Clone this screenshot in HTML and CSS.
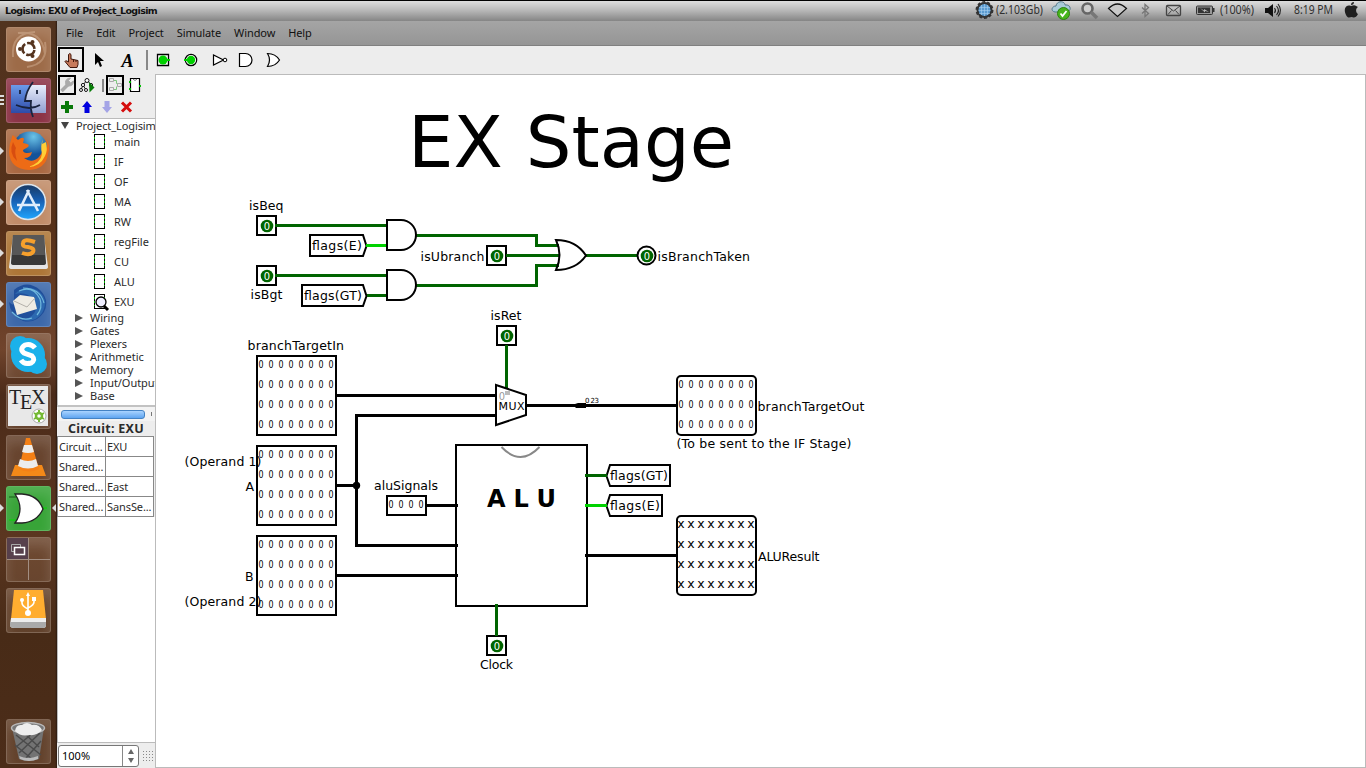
FILE: index.html
```
<!DOCTYPE html>
<html lang="en">
<head>
<meta charset="utf-8">
<title>Logisim: EXU of Project_Logisim</title>
<link rel="stylesheet" href="styles.css">
</head>
<body>
<header class="topbar">
  <span class="title">Logisim: EXU of Project_Logisim</span>
  <svg class="tray" width="400" height="21" viewBox="966 0 400 21">
    <circle cx="984.500" cy="10" r="7" fill="#5b9bd0" stroke="#333" stroke-width="2"/><circle cx="984.500" cy="10" r="8.200" fill="none" stroke="#333" stroke-width="1.500" stroke-dasharray="3 2.150"/>
    <path d="M979 7.500h11M978.500 10.500h12M979 13.500h11M981.500 5v10M984.500 4v12M987.500 5v10" stroke="#a9d0ee" stroke-width=".6"/>
    <text x="996" y="14" textLength="47" lengthAdjust="spacingAndGlyphs">(2.103Gb)</text>
    <path d="M1055 12c-5-1-3-6 1-6 1-6 9-5 9-1 6-1 7 6 2 7z" fill="#a9cbd9" stroke="#55798c"/>
    <circle cx="1063.500" cy="13.500" r="6" fill="#48b51c" stroke="#2d8410"/><path d="M1060.500 13.500l2 2.500 4-5" stroke="#fff" stroke-width="1.800" fill="none"/>
    <circle cx="1087.500" cy="8.500" r="5" fill="#ccc" stroke="#666" stroke-width="2.600"/><path d="M1091 12l6 6" stroke="#777" stroke-width="3.500"/>
    <path d="M1108.500 8.500Q1117.500-.5 1126.500 8.500L1117.500 16.500z" fill="#c9c9c9" stroke="#111" stroke-width="1.200"/>
    <path d="M1142 7.500l6.500 6-3.500 3v-12l3.500 3-6.500 6" fill="none" stroke="#777" stroke-width="1.300"/>
    <rect x="1166.500" y="5.500" width="14" height="10" rx="1" fill="none" stroke="#444" stroke-width="1.300"/><path d="M1167 6l6.500 5 6.500-5M1168 14.500l3.500-4M1179 14.500l-3.500-4" fill="none" stroke="#444"/>
    <rect x="1196.500" y="6" width="16" height="8.500" rx="1" fill="#999" stroke="#333"/><path d="M1198 7.500h12v5.500h-12z" fill="#333"/><path d="M1213 8h1.500v4h-1.500z" fill="#333"/><path d="M1200 8l4 2.500v-1.500l5 3-4-1v1.500z" fill="#bbb"/>
    <text x="1220" y="14" textLength="34" lengthAdjust="spacingAndGlyphs">(100%)</text>
    <path d="M1265 8h3l5-4v13l-5-4h-3z" fill="#111"/><path d="M1274.500 8q2 2.500 0 5M1276.500 6q4 4.500 0 9M1278 4q5 6.500 0 12.500" fill="none" stroke="#222" stroke-width="1.100"/>
    <text x="1294" y="14" textLength="39" lengthAdjust="spacingAndGlyphs">8:19 PM</text>
    <path d="M1351 6c4-2 5 0 7 1-3 2-2 6 0 7-2 4-4 4-6 3-2 0-4 2-6-2-3-6 0-11 5-9zM1351 5c0-2 1-3 3-3 0 2-1 3-3 3z" fill="#202020"/>
  </svg>
</header>
<div class="desktop">
  <nav class="launcher">
    <div class="tile ubuntu"><svg viewBox="0 0 45 45"><path d="M7 30Q5 6 29 5M39 15q4 22-18 25M12 6q24-3 27 21" fill="none" stroke="#e0c0a6" stroke-opacity=".4" stroke-width="2"/><circle cx="22.500" cy="22" r="12.500" fill="#fff"/><circle cx="22.500" cy="22" r="6" fill="none" stroke="#55341f" stroke-width="2.600" stroke-dasharray="10.500 2.060" stroke-dashoffset="-1"/><circle cx="14" cy="22" r="2" fill="#55341f"/><circle cx="26.500" cy="15" r="2" fill="#55341f"/><circle cx="26.500" cy="29" r="2" fill="#55341f"/></svg></div>
    <div class="tile finder"><svg viewBox="0 0 45 45"><defs><linearGradient id="fa" x2="0" y2="1"><stop stop-color="#6c9bea"/><stop offset="1" stop-color="#2e4ba8"/></linearGradient><linearGradient id="fb" x2="0" y2="1"><stop stop-color="#e8edfb"/><stop offset="1" stop-color="#909ed0"/></linearGradient></defs><path d="M5 7h35v28H5z" fill="url(#fb)"/><path d="M5 7h19q-4 7-5 16h6v12H5z" fill="url(#fa)"/><path d="M27 4Q20 13 19 23h6q-1 8 2 16M10 27q14 6 24 0M14 12v4M31 12v4" fill="none" stroke="#19233d" stroke-width="1.800"/></svg></div>
    <div class="tile firefox"><svg viewBox="0 0 45 45"><defs><radialGradient id="gl" cx=".6" cy=".15"><stop stop-color="#6bc4e9"/><stop offset="1" stop-color="#14539a"/></radialGradient></defs><circle cx="24" cy="20" r="17.500" fill="url(#gl)"/><path d="M6 8q0-3 2-1l4 4q5-4 6-1l-1 4q8 1 5 4l-5 3q0 3 4 3 3 0 5-1-1 6-8 6 8 6 15-1 5-6 4-14l4 5q1-4-1-9 5 6 2 15-2 15-19 16Q4 40 3 23 3 15 6 8z" fill="#ed6b16"/><path d="M37 10l-1 5 4-2q2 8-1 14-5 11-17 11 13-4 14-13-2-8 1-15z" fill="#ffce36"/><path d="M7 13q-5 11 4 19-3-10-1-13z" fill="#d84d10"/></svg></div>
    <div class="tile store"><svg viewBox="0 0 45 45"><defs><linearGradient id="ap" x2="0" y2="1"><stop stop-color="#183962"/><stop offset=".45" stop-color="#175fb2"/><stop offset="1" stop-color="#20a6ff"/></linearGradient></defs><circle cx="22" cy="22" r="17.500" fill="url(#ap)" stroke="#dce6ee" stroke-width="1.500"/><path d="M23 10L13 31M21 10l11 21M11 25h23" stroke="#dfecfb" stroke-width="2.600" fill="none"/></svg></div>
    <div class="tile sublime"><svg viewBox="0 0 45 45"><path d="M7 5h31l4 31q0 2-3 2H6q-3 0-3-2z" fill="#e4e4e4"/><path d="M7 4h31l2 28q0 2-3 2H8q-3 0-3-2z" fill="#383838"/><path d="M7 4h31l1 20H6z" fill="#575757"/><path d="M29 11q-11-4-12 1-1 4 5 4 7 1 5 5-3 4-11 1" stroke="#f6a02c" stroke-width="4" fill="none"/></svg></div>
    <div class="tile thunderbird"><svg viewBox="0 0 45 45"><path d="M8 8q13-11 26 0 10 10 4 22-8 12-21 9Q4 33 3 20q4 4 5 2z" fill="#204f9b"/><path d="M9 12Q18 2 31 8q13 9 5 23-7 10-19 7 11-3 13-11 1-8-8-14-6-3-13-1z" fill="#2c69b0"/><path d="M7 19l7-6 14 2 3 12-20 6z" fill="#efece3"/><path d="M8 19l13 6 8-9" fill="none" stroke="#b4b1aa"/><path d="M13 9q14-6 21 8 3 9-3 16M17 6q17 0 21 15M6 30q9 10 20 6" fill="none" stroke="#70b8dd" stroke-width="1.200"/></svg></div>
    <div class="tile plain"><svg viewBox="0 0 45 45"><circle cx="22" cy="22" r="17" fill="#1bb1ea"/><circle cx="14" cy="13" r="10" fill="#1bb1ea"/><circle cx="31" cy="31" r="10" fill="#1bb1ea"/><path d="M29 15q-4-5-10-3-6 4-1 8l8 3q4 4-1 7-7 2-10-3" stroke="#fff" stroke-width="5" fill="none"/></svg></div>
    <div class="tile plain"><svg viewBox="0 0 45 45"><path d="M2 2h40v40H2z" fill="#e8e8e8"/><g class="tex"><text x="3" y="20">T</text><text x="14" y="25">E</text><text x="25" y="20">X</text></g><circle cx="33" cy="32" r="7" fill="#fff" stroke="#aaa"/><circle cx="33" cy="32" r="3" fill="none" stroke="#75b934" stroke-width="2.500"/><path d="M33 26v3M33 35v3M28 29l2.500 1.500M35.500 33.500L38 35M38 29l-2.500 1.500M30.500 33.500L28 35" stroke="#75b934" stroke-width="2"/></svg></div>
    <div class="tile plain"><svg viewBox="0 0 45 45"><path d="M9 30h27l4 11H5z" fill="#f48918"/><path d="M20 3h4l9 31q-10 5-20 0z" fill="#f48016"/><path d="M18 10h8l2 7q-6 2-12 0zM14 24q8 4 16 0l2 7q-10 5-20 0z" fill="#ececec"/></svg></div>
    <div class="tile gate"><svg viewBox="0 0 45 45"><path d="M3 11h10" stroke="#175a17"/><path d="M3 34h10M37 22h4" stroke="#00dc00"/><path d="M9 8h7q16 1 21 15-6 13-21 14H9q10-14 0-29z" fill="#fff" stroke="#222" stroke-width="1.300"/></svg></div>
    <div class="tile plain"><svg viewBox="0 0 45 45"><path d="M1 1h21v21H1z" fill="#57404c"/><path d="M22.500 1v42M1 22.500h43" stroke="#a28e82"/><path d="M5.500 7.500h9v7h-9z" fill="none" stroke="#aaa"/><path d="M8.500 10.500h10v7h-10z" fill="#57404c" stroke="#fff" stroke-width="1.500"/></svg></div>
    <div class="tile plain"><svg viewBox="0 0 45 45"><path d="M8 2h29l3 29H5z" fill="#ffad30"/><path d="M5 30h35v7q0 3-3 3H8q-4 0-4-3z" fill="#eee"/><path d="M4 34h36v3q0 3-3 3H8q-4 0-4-3z" fill="#aaa"/><path d="M22 7v18M16 12v3q0 3 6 6M28 11v3q0 3-6 6" fill="none" stroke="#fff" stroke-width="1.600"/><circle cx="22" cy="25" r="3" fill="#fff"/><circle cx="16" cy="12" r="2" fill="#fff"/><path d="M20 8l2-4 2 4zM26 9h4v4h-4z" fill="#fff"/></svg></div>
    <div class="tile plain trash"><svg viewBox="0 0 45 45"><path d="M6 9h32l-5 31q-11 4-20 0z" fill="#737373"/><path d="M10 16l25 20M18 14l15 14M9 26l17 14M34 14L13 34M35 22L20 39M27 14L10 28" stroke="#4b4b4b" stroke-width="1.500"/><path d="M13 37q9 4 19 0v3q-9 4-18 0z" fill="#bbb"/><ellipse cx="22" cy="9" rx="16.500" ry="5.500" fill="#777" stroke="#b9b9b9" stroke-width="1.500"/><path d="M9 12q1-7 7-6 5-4 10 0 7-1 10 5-5 6-13 5-8 2-14-4z" fill="#eee"/></svg></div>
    <i class="run r1"></i><i class="run r2"></i><i class="run r3"></i><i class="run r4"></i><i class="run r5"></i><i class="run focus"></i>
    <i class="stack"></i>
  </nav>
  <main class="app">
    <div class="menubar"><span>File</span><span>Edit</span><span>Project</span><span>Simulate</span><span>Window</span><span>Help</span></div>
    <div class="toolbar">
      <svg width="230" height="28" viewBox="57 46 230 28">
        <rect x="59" y="48" width="24" height="23" fill="none" stroke="#000" stroke-width="2"/>
        <path d="M68.500 62V54.500q1.500-2 2.500 0V59l7 1.500v4l-1 3h-7l-5-6q0-1 2-.5z" fill="#c77a5b" stroke="#40160b"/><path d="M73.500 59v3M76 60v2" stroke="#40160b"/>
        <path d="M95 53v12l3-3 2 5 2-1-2-5h4z" fill="#000"/>
        <text class="tool-a" x="121.500" y="67">A</text>
        <path d="M147 50v20" stroke="#888" stroke-width="2"/>
        <path d="M157.500 54.500h11v11h-11z" fill="#fff" stroke="#000" stroke-width="1.300"/><circle cx="163" cy="60" r="4.500" fill="#00d000"/><path d="M163 60h7" stroke="#00d000" stroke-width="2"/>
        <circle cx="191" cy="60" r="5.700" fill="#fff" stroke="#000" stroke-width="1.200"/><circle cx="191" cy="60" r="4.200" fill="#00d000"/><path d="M184 60h7" stroke="#00d000" stroke-width="2"/>
        <path d="M213.500 55v10l10-5z" fill="#fff" stroke="#000" stroke-width="1.200"/><circle cx="225" cy="60" r="1.800" fill="#fff" stroke="#000"/>
        <path d="M239.500 53.500h6a6.500 6.500 0 0 1 0 13h-6z" fill="#fff" stroke="#000" stroke-width="1.200"/>
        <path d="M267.500 53.500q8 0 12 6.500-4 6.500-12 6.500 4-6.500 0-13z" fill="#fff" stroke="#000" stroke-width="1.200"/>
      </svg>
    </div>
    <div class="work">
      <aside class="side">
        <svg class="minis" width="98" height="44" viewBox="57 74 98 44">
          <rect x="59" y="76" width="16" height="18" fill="none" stroke="#000" stroke-width="2"/>
          <path d="M61.500 91l6.500-6.500" stroke="#aaa" stroke-width="3.500"/><path d="M70.500 78l-2 2.500 2 2.500 3-2q0 5-5 5-3 0-3-3.500 0-4 5-4.500z" fill="#aaa" stroke="#aaa"/>
          <path d="M87 80l-4 5-2 5M83 85l3 5M87 80l4 5" fill="none" stroke="#222"/><g fill="#fff" stroke="#111"><circle cx="87" cy="80.500" r="2"/><circle cx="83" cy="85" r="1.600"/><circle cx="91" cy="85" r="1.600"/><circle cx="81" cy="90" r="1.500"/><circle cx="86" cy="90" r="1.500"/></g><path d="M89 82l5.500 5.500-5 5z" fill="#087c08"/>
          <path d="M103 79v13" stroke="#888" stroke-width="2"/>
          <rect x="107" y="76" width="16" height="18" fill="none" stroke="#000" stroke-width="2"/>
          <g fill="none" stroke="#aaa"><path d="M109.500 78.500h4v3h-4zM109.500 87.500h4v3h-4zM117.500 83.500h4v3h-4z"/><path d="M114 80.500h2.500v3h1M114 89.500h2.500v-3" stroke="#7fc77f"/></g>
          <path d="M130.500 78.500h9v13h-9z" fill="#fff" stroke="#000" stroke-width="1.200"/><path d="M133 79q2 3 4 0" fill="none" stroke="#777"/><path d="M129 82h2M129 89h2M139 86h2" stroke="#00c000" stroke-width="2"/>
          <path d="M67 101v12M61 107h12" stroke="#087808" stroke-width="4"/>
          <path d="M87 101l5 6h-2.500v6h-5v-6H82z" fill="#0000df"/>
          <path d="M107 113l-5-6h2.500v-6h5v6h2.500z" fill="#a4a4e6"/>
          <path d="M122 102.500l9 9M131 102.500l-9 9" stroke="#d50d0d" stroke-width="3"/>
        </svg>
        <div class="tree">
          <div class="root"><i class="down"></i><span>Project_Logisim</span></div>
          <div class="circ"><i class="chip"></i><span>main</span></div>
          <div class="circ"><i class="chip"></i><span>IF</span></div>
          <div class="circ"><i class="chip"></i><span>OF</span></div>
          <div class="circ"><i class="chip"></i><span>MA</span></div>
          <div class="circ"><i class="chip"></i><span>RW</span></div>
          <div class="circ"><i class="chip"></i><span>regFile</span></div>
          <div class="circ"><i class="chip"></i><span>CU</span></div>
          <div class="circ"><i class="chip"></i><span>ALU</span></div>
          <div class="circ"><i class="chip"><svg class="lens" width="18" height="18" viewBox="0 0 18 18"><circle cx="7" cy="8" r="5" fill="#eef" stroke="#000" stroke-width="1.300"/><path d="M10 12l4 4" stroke="#000" stroke-width="3"/></svg></i><span>EXU</span></div>
          <div class="lib"><i class="right"></i><span>Wiring</span></div>
          <div class="lib"><i class="right"></i><span>Gates</span></div>
          <div class="lib"><i class="right"></i><span>Plexers</span></div>
          <div class="lib"><i class="right"></i><span>Arithmetic</span></div>
          <div class="lib"><i class="right"></i><span>Memory</span></div>
          <div class="lib io"><i class="right"></i><span>Input/Output</span></div>
          <div class="lib"><i class="right"></i><span>Base</span></div>
        </div>
        <div class="hscroll"><div class="thumb"></div><i></i></div>
        <div class="attr-title">Circuit: EXU</div>
        <div class="attrs"><span>Circuit ...</span><span>EXU</span><span>Shared...</span><span></span><span>Shared...</span><span>East</span><span>Shared...</span><span>SansSe...</span></div>
        <div class="blank"></div>
        <div class="zoombar"><div class="spin"><span>100%</span><div class="arrows"><i class="up"></i><i class="dn"></i></div></div><div class="grid"></div></div>
      </aside>
      <section class="canvas">
        <svg class="circuit" width="1209" height="692" viewBox="156 75 1209 692">
          <text class="big" x="408" y="167" textLength="326">EX Stage</text>
          <g class="box">
            <rect x="257" y="216" width="19" height="19"/><rect x="257" y="266" width="19" height="19"/>
            <rect x="487" y="246" width="19" height="19"/><rect x="497" y="326" width="19" height="19"/><rect x="487" y="636" width="19" height="19"/>
            <rect x="257" y="356" width="79" height="79"/><rect x="257" y="446" width="79" height="79"/><rect x="257" y="536" width="79" height="79"/>
            <rect x="387" y="496" width="39" height="19"/><rect x="456" y="445" width="131" height="161"/>
            <rect x="677" y="376" width="79" height="59" rx="4"/><rect x="677" y="516" width="79" height="79" rx="4"/>
            <path d="M310 235h53l3.500 11-3.500 10h-53zM302 285h61l3.500 11-3.500 10h-61zM670 465h-60l-3.500 11 3.500 10h60zM662 495h-52l-3.500 11 3.500 10h52z"/>
          </g>
          <path class="notch" d="M501.500 447q19 20 38 0"/>
          <g class="wire lo"><path d="M275 225.500h112M275 275.500h112M367 295.500h20M416 235.500h120.500v10H559M416 285.500h120.500v-20H559M506 255.500h53M585 255.500h53M506.500 345v43M585 475.500h22M496.500 604v32"/></g>
          <g class="wire hi"><path d="M366 245.500h21M585 505.500h22"/></g>
          <g class="wire bus"><path d="M336 395.500h161M497 415.500H356.500v130H458M336 485.500h20M336 575.500h122M426 505.500h32M526 405.500h151M585 555.500h92"/></g>
          <path d="M575 404l3-1h8v5h-10l-1-1z"/>
          <circle cx="356.500" cy="485.500" r="3.700"/>
          <g class="gates"><path d="M387 220h14a15 15 0 0 1 0 30h-14zM387 270h14a15 15 0 0 1 0 30h-14zM556 240q20 0 30 15.500-10 14.500-30 14.500 7-15 0-30z"/><circle cx="646.500" cy="255.500" r="9"/><path d="M496 385l30 10v20l-30 10z" fill="none"/></g>
          <path d="M505 391h5v4h-5z" fill="#bbb"/>
          <g class="dot"><circle cx="267" cy="226" r="6.300"/><circle cx="267" cy="276" r="6.300"/><circle cx="497" cy="256" r="6.300"/><circle cx="507" cy="336" r="6.300"/><circle cx="497" cy="646" r="6.300"/><circle cx="647" cy="256" r="6.300"/></g>
          <g class="bit white"><text x="267" y="230">0</text><text x="267" y="280">0</text><text x="497" y="260">0</text><text x="507" y="340">0</text><text x="497" y="650">0</text><text x="647" y="260">0</text></g>
          <g class="label">
            <text x="249" y="210" textLength="34.500">isBeq</text><text x="250.500" y="299" textLength="32">isBgt</text>
            <text x="312" y="250" textLength="50">flags(E)</text><text x="304" y="300" textLength="58">flags(GT)</text>
            <text x="420.500" y="261" textLength="64">isUbranch</text><text x="657.500" y="261" textLength="92.500">isBranchTaken</text>
            <text x="490.500" y="320" textLength="31">isRet</text><text x="247.500" y="350" textLength="96.500">branchTargetIn</text>
            <text x="184.500" y="466" textLength="77">(Operand 1)</text><text x="245.500" y="491">A</text><text x="245" y="581">B</text><text x="184.500" y="606" textLength="77">(Operand 2)</text>
            <text x="374" y="490" textLength="64">aluSignals</text><text x="480" y="669" textLength="33">Clock</text>
            <text x="610" y="480" textLength="58">flags(GT)</text><text x="610" y="510" textLength="50">flags(E)</text>
            <text x="757.500" y="411" textLength="107">branchTargetOut</text><text x="676.500" y="448" textLength="175">(To be sent to the IF Stage)</text><text x="758" y="561" textLength="61.500">ALUResult</text>
          </g>
          <text class="mux" x="498.500" y="410" textLength="26">MUX</text>
          <text class="tiny" x="585" y="403" textLength="14">0 23</text>
          <text class="bit gray" x="502" y="400">0</text>
          <text class="alu" x="487" y="507" textLength="69">A L U</text>
          <g class="bit" transform="translate(261) scale(.8 1)">
            <text x="0 12.5 25 37.5 50 62.5 75 87.5" y="368">00000000</text><text x="0 12.5 25 37.5 50 62.5 75 87.5" y="388">00000000</text><text x="0 12.5 25 37.5 50 62.5 75 87.5" y="408">00000000</text><text x="0 12.5 25 37.5 50 62.5 75 87.5" y="428">00000000</text>
            <text x="0 12.5 25 37.5 50 62.5 75 87.5" y="458">00000000</text><text x="0 12.5 25 37.5 50 62.5 75 87.5" y="478">00000000</text><text x="0 12.5 25 37.5 50 62.5 75 87.5" y="498">00000000</text><text x="0 12.5 25 37.5 50 62.5 75 87.5" y="518">00000000</text>
            <text x="0 12.5 25 37.5 50 62.5 75 87.5" y="548">00000000</text><text x="0 12.5 25 37.5 50 62.5 75 87.5" y="568">00000000</text><text x="0 12.5 25 37.5 50 62.5 75 87.5" y="588">00000000</text><text x="0 12.5 25 37.5 50 62.5 75 87.5" y="608">00000000</text>
            <text x="162.5 175 187.5 200" y="508">0000</text>
          </g>
          <g class="bit" transform="translate(681) scale(.8 1)">
            <text x="0 12.5 25 37.5 50 62.5 75 87.5" y="388">00000000</text><text x="0 12.5 25 37.5 50 62.5 75 87.5" y="408">00000000</text><text x="0 12.5 25 37.5 50 62.5 75 87.5" y="428">00000000</text>
          </g>
          <g class="bit ex">
            <text x="681 691 701 711 721 731 741 751" y="528">xxxxxxxx</text><text x="681 691 701 711 721 731 741 751" y="548">xxxxxxxx</text><text x="681 691 701 711 721 731 741 751" y="568">xxxxxxxx</text><text x="681 691 701 711 721 731 741 751" y="588">xxxxxxxx</text>
          </g>
        </svg>
      </section>
    </div>
  </main>
</div>
</body>
</html>
```
FILE: styles.css
```
* { box-sizing: border-box; }
body { margin: 0; width: 1366px; height: 768px; overflow: hidden; display: flex; flex-direction: column; font: 11px/13px "Noto Sans", sans-serif; color: #2a2a2a; background: #fff; }
.topbar { height: 21px; flex: none; display: flex; justify-content: space-between; align-items: center; padding-left: 5px; border-top: 1px solid #000; background: linear-gradient(#ddd, #b5b5b5 50%, #858585); }
.title { font: bold 9.500px/18px "DejaVu Sans", sans-serif; letter-spacing: -.63px; color: #111; }
.tray { flex: none; margin-top: -1px; }
.tray text { font: 12px "Noto Sans", sans-serif; fill: #303030; }
.desktop { display: flex; flex: 1; min-height: 0; }
.launcher { position: relative; width: 57px; flex: none; padding: 6px 6px 4px; display: flex; flex-direction: column; gap: 6px; background: linear-gradient(90deg, transparent 55px, #2b1a10), linear-gradient(#51331f, #573119 28%, #70442c 44%, #4b2b19 50%, #5b3620 69%, #482b17 82%, #4c2d19); }
.tile { width: 45px; height: 45px; flex: none; border-radius: 3px; border: 1px solid rgba(255,255,255,.2); box-shadow: inset 0 8px 12px rgba(255,255,255,.14); }
.tile svg { display: block; width: 45px; height: 45px; margin: -1px; }
.ubuntu { background: #9d6b48; }
.finder { background: #8c3346; }
.firefox { background: #a96842; }
.store { background: #c18c68; }
.sublime { background: #ad7637; }
.thunderbird { background: #3c68aa; }
.gate { background: #38a438; }
.plain { background: rgba(170,130,105,.25); }
.trash { margin-top: auto; }
.tex { font: 20px "Liberation Serif", serif; fill: #222; }
.run { position: absolute; left: 0; border: 4px solid transparent; border-left-color: #ddd; border-right: 0; }
.r1 { top: 126px; }
.r2 { top: 177px; }
.r3 { top: 228px; }
.r4 { top: 279px; }
.r5 { top: 483px; }
.focus { left: auto; right: 1px; top: 483px; border-left: 0; border-right: 4px solid #ddd; }
.stack { position: absolute; left: 0; top: 74px; width: 4px; height: 10px; background: repeating-linear-gradient(#ddd 0 2px, transparent 2px 4px); }
.app { flex: 1; min-width: 0; display: flex; flex-direction: column; background: #ededed; }
.menubar { height: 25px; flex: none; display: flex; align-items: center; gap: 13px; padding: 0 0 2px 9px; background: linear-gradient(#a5a5a5, #959595); border-bottom: 1px solid #808080; letter-spacing: -.1px; color: #111; }
.toolbar { height: 28px; flex: none; }
.toolbar svg { display: block; }
.tool-a { font: italic bold 18px "Liberation Serif", serif; }
.work { flex: 1; min-height: 0; display: flex; }
.side { width: 99px; flex: none; display: flex; flex-direction: column; overflow: hidden; border-right: 1px solid #bbb; }
.minis { display: block; flex: none; }
.tree { height: 287px; flex: none; border-top: 1px solid #bbb; border-left: 1px solid #bbb; background: #fff; overflow: hidden; white-space: nowrap; }
.root, .lib, .circ { display: flex; align-items: center; }
.root { height: 12px; padding-left: 3px; gap: 7px; letter-spacing: -.1px; }
.circ { height: 20px; padding-left: 36px; gap: 9px; }
.lib { height: 13px; padding-left: 17px; gap: 7px; }
.io { letter-spacing: -.05px; }
.down { border: 4px solid transparent; border-top: 7px solid #444; border-bottom: 0; }
.right { border: 4px solid transparent; border-left: 8px solid #555; border-right: 0; }
.chip { position: relative; width: 11px; height: 15px; border: 1px solid #000; background: #fff; }
.chip::before { content: ""; position: absolute; inset: 2px -1px; background: repeating-linear-gradient(#00b800 0 2px, transparent 2px 4px) 0 0 / 1px 100% no-repeat, repeating-linear-gradient(#00b800 0 2px, transparent 2px 4px) 100% 0 / 1px 100% no-repeat; }
.lens { position: absolute; left: -1px; top: -1px; }
.hscroll { height: 16px; flex: none; display: flex; align-items: center; justify-content: space-between; padding: 0 3px 0 4px; border-top: 2px solid #c2c2c2; background: #f3f3f3; }
.thumb { width: 84px; height: 9px; border: 1px solid #4382c4; border-radius: 3px; background: linear-gradient(#a9d3ff, #5fa5f0); }
.hscroll i { width: 1px; height: 4px; background: #777; }
.attr-title { height: 16px; flex: none; text-align: center; font: bold 12.500px/16px "Noto Sans", sans-serif; letter-spacing: .3px; background: #ededed; }
.attrs { flex: none; display: grid; grid-template-columns: 48px 48px; grid-auto-rows: 20px; width: 97px; margin-top: -1px; border-top: 1px solid #888; border-left: 1px solid #888; background: #fff; }
.attrs span { border-right: 1px solid #888; border-bottom: 1px solid #888; padding-left: 1px; line-height: 19px; letter-spacing: -.1px; white-space: nowrap; overflow: hidden; }
.blank { flex: 1; background: #fff; border-left: 1px solid #bbb; border-bottom: 1px solid #bbb; }
.zoombar { height: 25px; flex: none; display: flex; align-items: center; gap: 3px; padding: 0 1px; }
.spin { width: 81px; height: 22px; display: flex; border: 1px solid #777; border-radius: 3px; background: #fff; line-height: 19px; color: #000; padding-left: 3px; font-size: 11px; }
.arrows { margin-left: auto; width: 16px; border-left: 1px solid #888; display: flex; flex-direction: column; align-items: center; justify-content: center; gap: 4px; }
.up, .dn { border: 3px solid transparent; }
.up { border-bottom: 5px solid #666; border-top: 0; }
.dn { border-top: 5px solid #666; border-bottom: 0; }
.grid { width: 12px; height: 12px; background: radial-gradient(#888 .7px, transparent .8px) 0 0 / 3px 3px; }
.canvas { flex: 1; min-width: 0; border: 1px solid #bbb; border-left: 0; background: #fff; overflow: hidden; }
.circuit { display: block; }
.circuit text { fill: #000; }
.box rect, .box path { fill: none; stroke: #000; stroke-width: 2; }
.wire { fill: none; stroke-width: 3; }
.lo { stroke: #006400; }
.hi { stroke: #00d200; }
.bus { stroke: #000; }
.notch { fill: none; stroke: #888; stroke-width: 2; }
.gates path, .gates circle { fill: none; stroke: #000; stroke-width: 2; }
.dot { fill: #006400; }
.circuit .label text { font: 12.500px "DejaVu Sans", sans-serif; }
.circuit .big { font: 72px "DejaVu Sans", sans-serif; }
.circuit .alu { font: bold 24px "DejaVu Sans", sans-serif; }
.circuit .mux { font: 11px "DejaVu Sans", sans-serif; }
.circuit .tiny { font: 7px "DejaVu Sans", sans-serif; }
.bit { font: 11px "DejaVu Sans Condensed", "DejaVu Sans", sans-serif; text-anchor: middle; }
.ex { font: 12.500px "DejaVu Sans", sans-serif; }
.circuit .white text { fill: #fff; }
.circuit .gray { fill: #999; }
```
